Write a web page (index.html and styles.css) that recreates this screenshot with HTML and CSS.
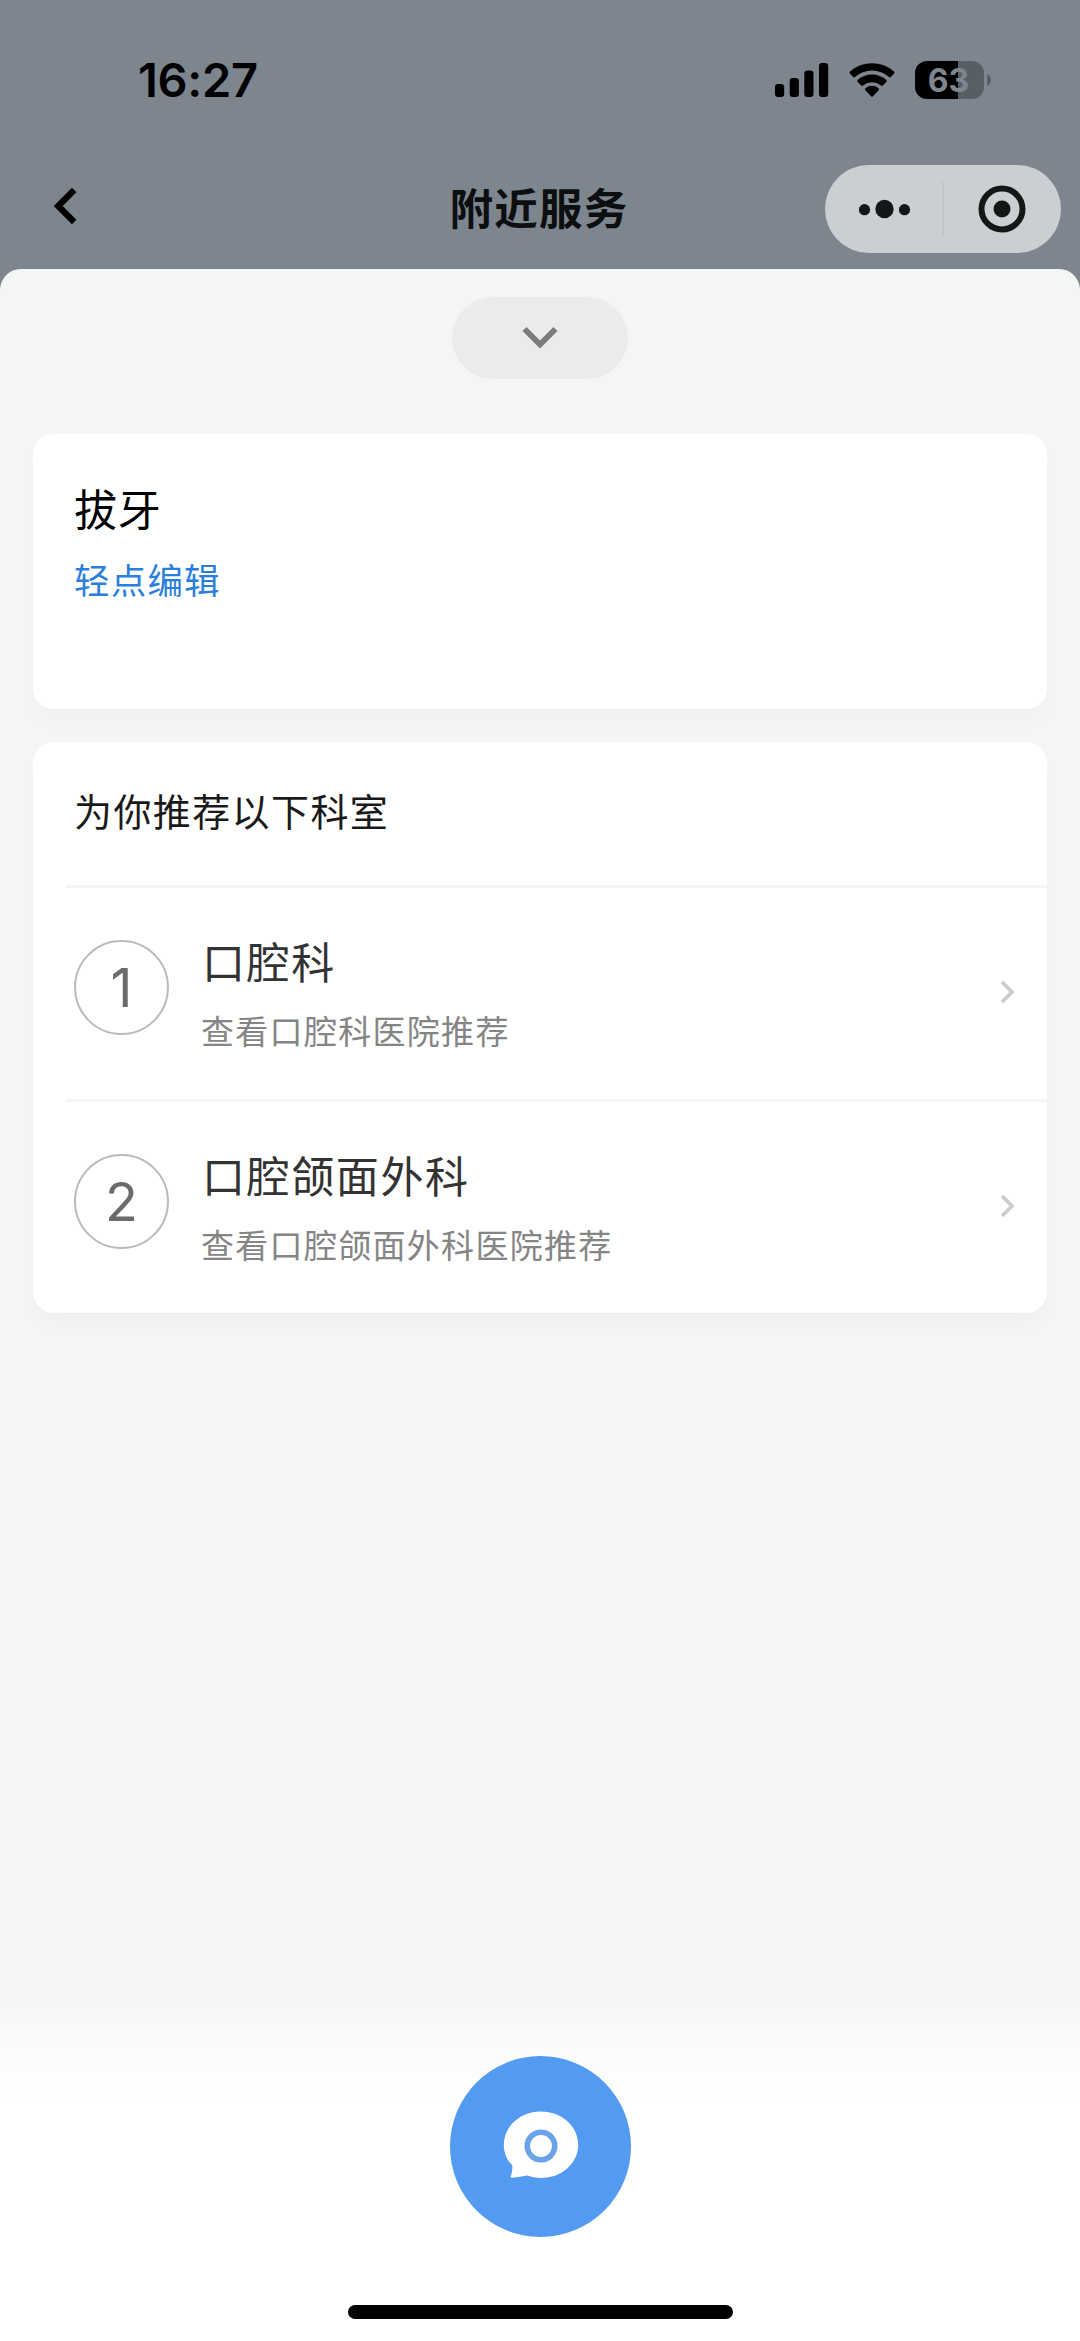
FILE: index.html
```html
<!DOCTYPE html>
<html lang="zh-CN">
<head>
<meta charset="utf-8">
<title>附近服务</title>
<link rel="stylesheet" href="styles.css">
</head>
<body>
<div class="screen">
  <div class="status-bar">
    <span class="time">16:27</span>
    <div class="status-icons">
      <svg class="signal" viewBox="0 0 54 34"><rect x="0" y="21" width="9.2" height="13" rx="3"/><rect x="14.7" y="15" width="9.2" height="19" rx="3"/><rect x="29.3" y="7.5" width="9.2" height="26.500" rx="3"/><rect x="44" y="0" width="9.2" height="34" rx="3"/></svg>
      <svg class="wifi" viewBox="0 0 46 34"><path d="M1 8.600Q0 9.800 1 10.800L4.200 14Q5 14.800 6 13.900A26 26 0 0 1 40 13.900Q41 14.800 41.800 14L45 10.800Q46 9.800 45 8.600A33 33 0 0 0 1 8.600Z"/><path d="M8.600 17Q7.700 18 8.600 18.900L12.200 22.500Q13 23.200 14 22.400A14.500 14.500 0 0 1 32 22.400Q33 23.200 33.800 22.500L37.400 18.900Q38.300 18 37.400 17A21.500 21.500 0 0 0 8.600 17Z"/><path d="M16.400 25.200Q15.500 26.200 16.400 27.200L22.300 33.500Q23 34.200 23.700 33.500L29.600 27.200Q30.500 26.200 29.600 25.200A10.500 10.500 0 0 0 16.400 25.200Z"/></svg>
      <div class="battery"><span class="battery-level">63</span><svg class="battery-tip" viewBox="0 0 4 12"><path d="M0 0Q4 2 4 6T0 12Z"/></svg></div>
    </div>
  </div>
  <div class="nav-bar">
    <svg class="back" viewBox="0 0 24 38"><path d="M20.200 3L4.200 19L20.200 35"/></svg>
    <h1 class="title">附近服务</h1>
    <div class="capsule">
      <svg class="more" viewBox="0 0 54 20"><circle cx="6.500" cy="10.700" r="5.600"/><circle cx="26.500" cy="10" r="9.200"/><circle cx="46.500" cy="10.700" r="5.600"/></svg>
      <span class="capsule-line"></span>
      <svg class="close" viewBox="0 0 48 48"><circle class="ring" cx="24" cy="24" r="20.500"/><circle cx="24" cy="24" r="8.500"/></svg>
    </div>
  </div>
  <main class="sheet">
    <div class="collapse"><svg viewBox="0 0 36 24"><path d="M2.500 3L18 18.500L33.500 3"/></svg></div>
    <section class="card query">
      <div class="query-text">拔牙</div>
      <div class="query-edit">轻点编辑</div>
    </section>
    <section class="card list">
      <h2 class="list-title">为你推荐以下科室</h2>
      <div class="item">
        <span class="number">1</span>
        <div class="item-body"><div class="item-name">口腔科</div><div class="item-desc">查看口腔科医院推荐</div></div>
        <svg class="arrow" viewBox="0 0 14 24"><path d="M2 2L12 12L2 22"/></svg>
      </div>
      <div class="item">
        <span class="number">2</span>
        <div class="item-body"><div class="item-name">口腔颌面外科</div><div class="item-desc">查看口腔颌面外科医院推荐</div></div>
        <svg class="arrow" viewBox="0 0 14 24"><path d="M2 2L12 12L2 22"/></svg>
      </div>
    </section>
    <footer class="dock">
      <div class="chat"><svg viewBox="0 0 76 68"><path d="M38 .5C58.600 .5 75.200 15 75.200 33.800S58.600 67 38 67C33 67 28.500 66.200 24.500 64.600C19.500 64.800 14 67 8.500 66.700Q7 66.500 7.700 65C9.300 61.500 9.500 58 9.300 54.300C4 49.500 .8 42 .8 33.800C.8 15 17.400 .5 38 .5Z"/><circle cx="38" cy="35" r="13.700"/></svg></div>
      <div class="home-indicator"></div>
    </footer>
  </main>
</div>
</body>
</html>
```
FILE: styles.css
```css
* { box-sizing: border-box; }
body { margin: 0; font-family: "Noto Sans CJK SC", sans-serif; }
svg { display: block; flex: none; overflow: visible; }
.screen {
  display: flex;
  flex-direction: column;
  width: 1080px;
  height: 2341px;
  overflow: hidden;
  background: #7d868e;
}
.status-bar {
  display: flex;
  justify-content: space-between;
  align-items: center;
  height: 160px;
  padding: 0 89px 0 138px;
}
.time { font: 600 47px/60px Inter, sans-serif; letter-spacing: -0.3px; }
.status-icons { display: flex; align-items: center; gap: 20px; }
.signal { width: 54px; height: 34px; }
.wifi { width: 46px; height: 34px; }
.battery { display: flex; align-items: center; gap: 3px; }
.battery-level {
  width: 69px;
  height: 38px;
  border-radius: 12px;
  background: linear-gradient(90deg, #000 43px, #575f66 43px);
  color: #7d868e;
  font: 700 32px/39px Inter, sans-serif;
  text-align: center;
  padding-right: 2px;
}
.battery-tip { width: 4px; height: 12px; fill: #575f66; }
.nav-bar {
  display: grid;
  grid-template-columns: 1fr auto 1fr;
  align-items: start;
  height: 109px;
  padding: 5px 19px 0 54px;
}
.back { width: 24px; height: 38px; margin-top: 22px; fill: none; stroke: #000; stroke-width: 6.400; }
.title {
  margin: 12px 0 0 -37px;
  color: #0c0e10;
  font-size: 43.500px;
  line-height: 60px;
  font-weight: 700;
  letter-spacing: 1.200px;
}
.capsule {
  display: flex;
  align-items: center;
  justify-self: end;
  width: 236px;
  height: 88px;
  padding: 0 35px 0 33px;
  border-radius: 44px;
  background: #cacfd2;
  fill: #151716;
}
.more { width: 54px; height: 20px; margin-top: -1px; }
.capsule-line { width: 2px; height: 55px; margin: 0 34px 0 30px; background: #c0c5c9; }
.close { width: 48px; height: 48px; margin-top: -1px; }
.ring { fill: none; stroke: #151716; stroke-width: 6; }
.sheet {
  display: flex;
  flex-direction: column;
  flex: 1;
  padding: 28px 33px 0;
  border-radius: 21px 21px 0 0;
  background: linear-gradient(#f4f6f6 1716px, #fff 1830px);
}
.collapse {
  display: flex;
  justify-content: center;
  align-items: center;
  align-self: center;
  width: 176px;
  height: 82px;
  border-radius: 41px;
  background: #eaeceb;
}
.collapse svg { width: 36px; height: 24px; fill: none; stroke: #7b7d7c; stroke-width: 5.800; }
.card { border-radius: 21px; background: #fff; box-shadow: 0 12px 26px -6px rgba(0, 10, 5, .035); }
.query { height: 275px; margin-top: 55px; padding: 43px 41px; }
.query-text { font-size: 43px; line-height: 60px; letter-spacing: .7px; color: #000; }
.query-edit { margin-top: 14px; font-size: 35.500px; line-height: 56px; letter-spacing: 1.200px; color: #2b7fdc; }
.list { height: 571px; margin-top: 33px; padding-left: 33px; }
.list-title {
  margin: 0;
  padding: 36px 0 0 8px;
  height: 142.500px;
  color: #1a1a1a;
  font-size: 38px;
  line-height: 64px;
  font-weight: 400;
  letter-spacing: 1.400px;
}
.item {
  display: flex;
  align-items: flex-start;
  height: 214.300px;
  padding: 52px 33px 0 8px;
  border-top: 3px solid #f4f5f5;
}
.number {
  width: 95px;
  height: 95px;
  border: 2px solid #b8bac1;
  border-radius: 50%;
  color: #6b6b6b;
  font: 400 54px/92px Inter, sans-serif;
  text-align: center;
}
.item-body { flex: 1; margin-left: 32px; }
.item-name { margin-top: -10px; padding-left: 1px; font-size: 43px; line-height: 60px; letter-spacing: 1.600px; color: #333; }
.item-desc { margin-top: 15px; font-size: 33px; line-height: 50px; letter-spacing: 1.300px; color: #858585; }
.arrow { width: 14px; height: 24px; margin-top: 40px; fill: none; stroke: #ccc; stroke-width: 3.600; }
.dock { display: flex; flex-direction: column; align-items: center; margin-top: auto; padding-bottom: 22px; gap: 68px; }
.chat {
  display: flex;
  justify-content: center;
  align-items: center;
  width: 181px;
  height: 181px;
  margin-left: 1px;
  border-radius: 50%;
  background: #529bf0;
}
.chat svg { width: 76px; height: 68px; margin-top: -3px; fill: #fff; }
.chat circle { stroke: #6ba3e8; stroke-width: 5.600; }
.home-indicator { width: 385px; height: 14px; border-radius: 7px; background: #000; }
```
